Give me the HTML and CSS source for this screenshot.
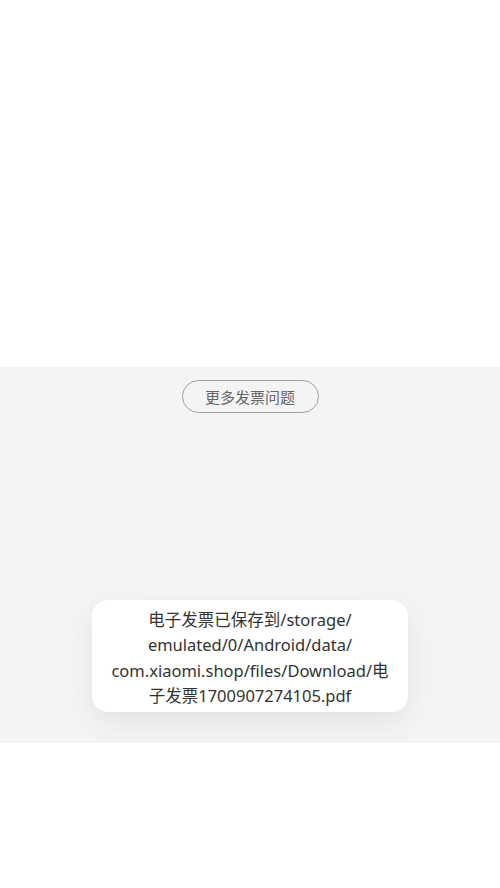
FILE: index.html
```html
<!DOCTYPE html>
<html lang="zh-CN">
<head>
    <meta charset="UTF-8">
    <meta name="viewport" content="width=device-width, initial-scale=1.0">
    <title>电子发票</title>
    <link rel="stylesheet" href="styles.css">
</head>
<body>
    <div class="top-space"></div>
    <div class="invoice-area">
        <button class="more-btn">更多发票问题</button>
        <div class="toast">电子发票已保存到/storage/<br>emulated/0/Android/data/<br>com.xiaomi.shop/files/Download/电<br>子发票1700907274105.pdf</div>
    </div>
</body>
</html>
```

FILE: styles.css
```css
body {
    margin: 0;
    padding: 0;
    background-color: #ffffff;
    font-family: "Noto Sans", "Noto Sans CJK SC", sans-serif;
}

.top-space {
    height: 367px;
}

.invoice-area {
    height: 376px;
    background-color: #f4f4f4;
    display: flex;
    flex-direction: column;
    align-items: center;
}

.more-btn {
    margin-top: 13px;
    width: 137px;
    height: 33px;
    border: 1.5px solid #a0a0a0;
    border-radius: 17px;
    background: transparent;
    color: #666666;
    font-family: "Noto Sans", "Noto Sans CJK SC", sans-serif;
    font-size: 15px;
    padding: 0;
}

.toast {
    margin-top: auto;
    margin-bottom: 31px;
    width: 316px;
    box-sizing: border-box;
    padding: 7px 8px 3px;
    background-color: #ffffff;
    border-radius: 16px;
    box-shadow: 0 10px 30px rgba(0, 0, 0, 0.07);
    color: #333333;
    font-size: 16.5px;
    line-height: 25.6px;
    text-align: center;
}
```
